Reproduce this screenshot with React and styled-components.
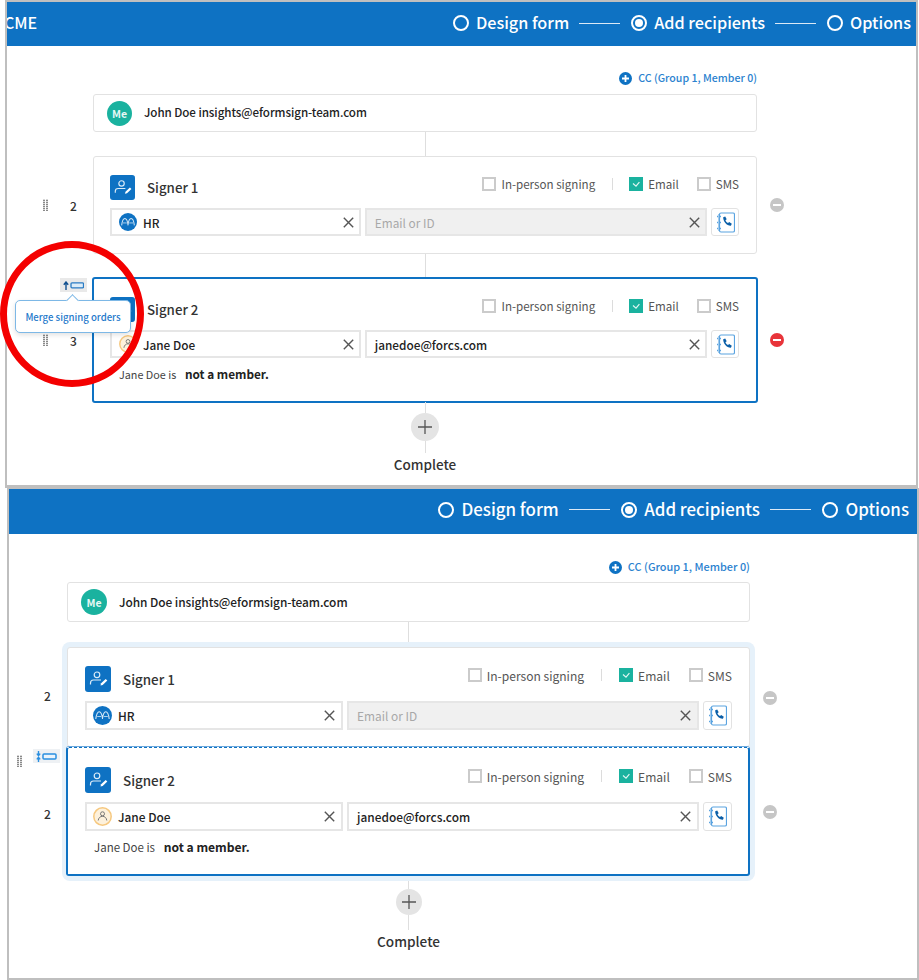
import React from 'react';
import styled, { createGlobalStyle, ThemeProvider } from 'styled-components';

const FONT = '"Noto Sans CJK KR", "Noto Sans", sans-serif';

const firstTheme = {
  gutter: 86, cardWidth: 664, iconSize: 25, avatar: 18, fieldHeight: 28, phoneWidth: 28, rowGap: 8,
  text: 11.6, optionText: 11.6, fieldText: 11.8, noteText: 10.8, title: 13.3, complete: 13.5,
  nav: 16.2, navGap: 7, headerHeight: 44, navRight: 5, navLift: 4,
  meHeight: 38, plus: 28, ccBottom: 8, topPad: 24, cardLeft: 16, cardRight: 17, notePad: 9,
  fieldLeft: 7, fieldRight: 5, optionExtra: 0,
};

const secondTheme = {
  gutter: 58, cardWidth: 683, iconSize: 26, avatar: 19, fieldHeight: 29, phoneWidth: 29, rowGap: 9,
  text: 11.9, optionText: 12.05, fieldText: 11.9, noteText: 11.5, title: 13.4, complete: 13.6,
  nav: 16.9, navGap: 7.5, headerHeight: 45, navRight: 8, navLift: 6,
  meHeight: 40, plus: 26, ccBottom: 7, topPad: 25, cardLeft: 17, cardRight: 17, notePad: 9,
  fieldLeft: 6, fieldRight: 6, optionExtra: 1,
};

const GlobalStyle = createGlobalStyle`
  html, body {
    margin: 0;
    padding: 0;
    background: #fff;
    font-family: ${FONT};
  }
  * { box-sizing: border-box; }
`;

const Page = styled.div`
  width: 919px;
  height: 980px;
  overflow: hidden;
`;

const Panel = styled.section`
  position: relative;
  margin-left: ${p => p.$left}px;
  width: ${p => p.$width}px;
  height: ${p => p.$height}px;
  border: 2px solid #bfbfbf;
  border-top-width: ${p => p.$top}px;
  border-bottom-width: ${p => p.$bottom}px;
  background: #fff;
`;

const Header = styled.header`
  display: flex;
  align-items: center;
  justify-content: space-between;
  height: ${p => p.theme.headerHeight}px;
  padding-right: ${p => p.theme.navRight}px;
  padding-bottom: ${p => p.theme.navLift}px;
  background: #0e72c3;
  color: #fff;
  overflow: hidden;
`;

const Brand = styled.span`
  margin-left: -3px;
  font-size: 16px;
  font-weight: 500;
`;

const Steps = styled.nav`
  display: flex;
  align-items: center;
  margin-left: auto;
  gap: 10px;
`;

const Step = styled.span`
  display: flex;
  align-items: center;
  gap: ${p => p.theme.navGap}px;
  font-size: ${p => p.theme.nav}px;
  font-weight: 500;
  white-space: nowrap;
`;

const StepDot = styled.i`
  display: flex;
  align-items: center;
  justify-content: center;
  width: 16px;
  height: 16px;
  margin-top: 2px;
  border: 2px solid #fff;
  border-radius: 50%;
  &::after {
    content: '';
    display: ${p => (p.$active ? 'block' : 'none')};
    width: 8px;
    height: 8px;
    border-radius: 50%;
    background: #fff;
  }
`;

const StepLine = styled.i`
  width: 41px;
  height: 1px;
  margin: 2px 1px 0 0;
  background: #dbe9f6;
`;

const Flow = styled.div`
  padding-top: ${p => p.theme.topPad}px;
`;

const Row = styled.div`
  display: grid;
  grid-template-columns: ${p => p.theme.gutter}px ${p => p.theme.cardWidth}px auto;
  align-items: center;
`;

const CcLink = styled.div`
  grid-column: 2;
  display: flex;
  justify-content: flex-end;
  align-items: center;
  gap: 6px;
  height: 16px;
  margin-bottom: ${p => p.theme.ccBottom}px;
  color: #2b82cf;
  font-size: ${p => p.theme.text - 1}px;
  font-weight: 500;
`;

const CcText = styled.span`
  padding-bottom: 2px;
`;

const MeCard = styled.div`
  grid-column: 2;
  display: flex;
  align-items: center;
  gap: 12px;
  height: ${p => p.theme.meHeight}px;
  padding-left: 13px;
  border: 1px solid #e2e2e2;
  border-radius: 3px;
  color: #222;
  font-size: ${p => p.theme.text}px;
  font-weight: 500;
  letter-spacing: -0.06px;
`;

const MeText = styled.span`
  padding-bottom: 2px;
`;

const MeAvatar = styled.span`
  display: flex;
  align-items: center;
  justify-content: center;
  width: ${p => p.theme.iconSize}px;
  height: ${p => p.theme.iconSize}px;
  border-radius: 50%;
  background: #1ab29f;
  color: #e8f8f5;
  font-size: 10.5px;
  font-weight: 700;
`;

const Connector = styled.div`
  grid-column: 2;
  justify-self: center;
  width: 1px;
  height: ${p => p.$height}px;
  background: #dedede;
`;

const Gutter = styled.div`
  position: relative;
  z-index: 2;
  align-self: stretch;
  grid-row: ${p => p.$row || 'auto'};
  display: flex;
  align-items: center;
  gap: 22px;
  margin-top: ${p => p.$nudge || 0}px;
  padding-left: ${p => p.$inset}px;
`;

const Grip = styled.span`
  display: block;
  width: 5px;
  height: 12px;
  background:
    repeating-linear-gradient(0deg, #8a8a8a 0 1px, #d8d8d8 1px 2px) left / 2px 100% no-repeat,
    repeating-linear-gradient(0deg, #8a8a8a 0 1px, #d8d8d8 1px 2px) right / 2px 100% no-repeat;
`;

const FloatingGrip = styled(Grip)`
  position: absolute;
  left: 8px;
  top: 113px;
`;

const Order = styled.span`
  color: #333;
  font-size: 12px;
  font-weight: 500;
`;

const MergeButton = styled.button`
  position: absolute;
  left: ${p => p.$left}px;
  top: ${p => p.$top}px;
  z-index: 2;
  display: flex;
  align-items: center;
  justify-content: center;
  width: 27px;
  height: 14px;
  padding: 0;
  border: 0;
  background: ${p => p.$bg};
`;

const Tooltip = styled.div`
  position: absolute;
  left: 8px;
  top: 22px;
  width: 116px;
  height: 33px;
  display: flex;
  align-items: center;
  justify-content: center;
  border: 1px solid #7db8e6;
  border-radius: 5px;
  background: #fff;
  box-shadow: 0 2px 5px rgba(0, 0, 0, 0.12);
  color: #1f7acb;
  font-size: 9.6px;
  font-weight: 500;
  white-space: nowrap;
  &::before {
    content: '';
    position: absolute;
    left: 52px;
    top: -5px;
    width: 8px;
    height: 8px;
    border-left: 1px solid #7db8e6;
    border-top: 1px solid #7db8e6;
    background: #fff;
    transform: rotate(45deg);
  }
`;

const Card = styled.article`
  padding: ${p => p.$top}px ${p => p.theme.cardRight}px ${p => p.$bottom}px ${p => p.theme.cardLeft}px;
  border: 1px solid #e2e2e2;
  border-radius: 3px;
  background: #fff;
  ${p => p.$focus && `
    margin: ${p.$flush ? '0 0 0 -1px' : '-1px'};
    border: 2px solid #0e72c3;
    ${p.$flush ? `
      padding-right: ${p.theme.cardRight - 1}px;
      border-top: 1px dashed #0e72c3;
      box-shadow: 0 -1px 0 #6ea9dd;
    ` : ''}
  `}
`;

const CardHead = styled.div`
  display: flex;
  justify-content: space-between;
  align-items: flex-start;
  height: ${p => p.theme.iconSize}px;
  margin-bottom: ${p => p.theme.rowGap}px;
`;

const SignerName = styled.div`
  display: flex;
  align-items: center;
  gap: 12px;
  color: #333;
  font-size: ${p => p.theme.title}px;
  font-weight: 500;
`;

const SignerBadge = styled.svg`
  width: ${p => p.theme.iconSize}px;
  height: ${p => p.theme.iconSize}px;
`;

const TagAvatar = styled.svg`
  flex: none;
  width: ${p => p.theme.avatar}px;
  height: ${p => p.theme.avatar}px;
`;

const Options = styled.div`
  display: flex;
  align-items: center;
  height: 18px;
  color: #555;
  font-size: ${p => p.theme.optionText}px;
`;

const Option = styled.label`
  display: flex;
  align-items: center;
  gap: 5px;
  margin-left: ${p => (p.$gap ? p.$gap + p.theme.optionExtra : 0)}px;
`;

const CheckBox = styled.span`
  display: flex;
  align-items: center;
  justify-content: center;
  width: 14px;
  height: 14px;
  border: ${p => (p.$checked ? '0' : '2px solid #cbcbcb')};
  background: ${p => (p.$checked ? '#1ab29f' : '#fff')};
`;

const Divider = styled.i`
  width: 1px;
  height: 12px;
  margin-left: 17px;
  background: #dcdcdc;
`;

const Fields = styled.div`
  display: grid;
  grid-template-columns: 0.733fr 1fr ${p => p.theme.phoneWidth}px;
  gap: 4px;
  height: ${p => p.theme.fieldHeight}px;
`;

const Field = styled.div`
  display: flex;
  align-items: center;
  gap: 6px;
  padding: 0 ${p => p.theme.fieldRight}px 0 ${p => p.$inset || p.theme.fieldLeft}px;
  border: 2px solid #e6e6e6;
  background: ${p => (p.$disabled ? '#f0f0f0' : '#fff')};
  color: ${p => (p.$disabled ? '#a8a8a8' : '#222')};
  font-size: ${p => p.theme.fieldText}px;
  font-weight: ${p => (p.$disabled ? 400 : 500)};
  span { flex: 1; }
`;

const PhoneButton = styled.button`
  display: flex;
  align-items: center;
  justify-content: center;
  padding: 0;
  border: 1px solid #e2e2e2;
  border-radius: 3px;
  background: #fff;
`;

const Note = styled.p`
  margin: 8px 0 2px;
  padding-left: ${p => p.theme.notePad}px;
  color: #444;
  font-size: ${p => p.theme.noteText}px;
  line-height: 16px;
  b {
    margin-left: 6px;
    color: #222;
    font-size: ${p => p.theme.text + 0.2}px;
    font-weight: 700;
  }
`;

const Remove = styled.button`
  grid-column: ${p => (p.$row ? 3 : 'auto')};
  grid-row: ${p => p.$row || 'auto'};
  display: flex;
  align-items: center;
  justify-content: center;
  width: 14px;
  height: 14px;
  margin-left: ${p => p.$gap}px;
  margin-top: ${p => p.$nudge || 0}px;
  padding: 0;
  border: 0;
  border-radius: 50%;
  background: ${p => (p.$danger ? '#e8343a' : '#c6c6c6')};
  &::after {
    content: '';
    width: 8px;
    height: 2px;
    background: #fff;
  }
`;

const Group = styled.div`
  position: relative;
  display: grid;
  grid-template-columns: ${p => p.theme.gutter - 5}px ${p => p.theme.cardWidth + 10}px auto;
  grid-template-rows: auto auto;
  align-items: center;
`;

const Halo = styled.div`
  grid-column: 2;
  grid-row: 1 / span 2;
  display: grid;
  grid-template-rows: subgrid;
  padding: 5px;
  border-radius: 8px;
  background: #e6f1fa;
`;

const AddButton = styled.button`
  grid-column: 2;
  justify-self: center;
  display: flex;
  align-items: center;
  justify-content: center;
  width: ${p => p.theme.plus}px;
  height: ${p => p.theme.plus}px;
  padding: 0;
  border: 0;
  border-radius: 50%;
  background: #e4e4e4;
`;

const Complete = styled.div`
  grid-column: 2;
  text-align: center;
  color: #333;
  font-size: ${p => p.theme.complete}px;
  font-weight: 500;
  line-height: 22px;
`;

const RedCircle = styled.div`
  position: absolute;
  left: -7px;
  top: 239px;
  z-index: 3;
  width: 144px;
  height: 146px;
  border: 7px solid #f40000;
  border-radius: 50%;
  pointer-events: none;
`;

const SignerIcon = () => (
  <SignerBadge viewBox="0 0 26 26">
    <rect width="26" height="26" rx="3" fill="#0e72c3" />
    <circle cx="12" cy="8.8" r="2.8" fill="none" stroke="#dcecf8" strokeWidth="1.2" />
    <path d="M5.5 18.5v-1.5a3 3 0 0 1 3-3h7.5" fill="none" stroke="#dcecf8" strokeWidth="1.2" />
    <path d="M15.5 19.5l.6-2.2 4.6-4.3 1.6 1.6-4.6 4.3z" fill="#fff" />
  </SignerBadge>
);

const GroupAvatar = () => (
  <TagAvatar viewBox="0 0 19 19">
    <circle cx="9.5" cy="9.5" r="9.5" fill="#0e72c3" />
    <path d="M2.8 13C3.300 9 4.300 5.800 6.200 5.800S9.100 9 9.600 13M9.400 13C9.900 9 10.900 5.800 12.800 5.800S15.700 9 16.200 13" fill="none" stroke="#d5e8f7" strokeWidth="1.100" />
    <path d="M4.200 10.500h4M10.800 10.500h4" stroke="#d5e8f7" strokeWidth="0.800" />
  </TagAvatar>
);

const PersonAvatar = () => (
  <TagAvatar viewBox="0 0 19 19">
    <circle cx="9.5" cy="9.5" r="8.700" fill="#fdf1dc" stroke="#f6c87f" strokeWidth="1.500" />
    <circle cx="9.5" cy="6.800" r="2" fill="none" stroke="#777" strokeWidth="1" />
    <path d="M5.200 13.500c.3-2.600 2-4.200 4.300-4.200s4 1.600 4.300 4.200" fill="none" stroke="#777" strokeWidth="1" />
  </TagAvatar>
);

const CloseIcon = () => (
  <svg width="11" height="11" viewBox="0 0 11 11">
    <path d="M.8.8l9.4 9.4M10.200.8L.8 10.200" stroke="#555" strokeWidth="1.400" />
  </svg>
);

const Tick = () => (
  <svg width="10" height="8" viewBox="0 0 10 8">
    <path d="M2 3.500l3 2.600 3.400-4" fill="none" stroke="#dff6f2" strokeWidth="1.200" />
  </svg>
);

const PhoneBook = () => (
  <svg width="19" height="21" viewBox="0 0 19 21">
    <rect x="3.500" y="1" width="15" height="19" rx="1.500" fill="#fff" stroke="#5aa3e0" strokeWidth="1.200" />
    <path d="M1 4.500h4M1 10.500h4M1 16.500h4" stroke="#5aa3e0" strokeWidth="1.600" />
    <path d="M2.500 2v17" stroke="#a3cbec" strokeWidth="1" />
    <path d="M7.200 5.200l2-.8 1.500 2.800-1.300 1.100c.5 1.200 1.400 2.200 2.600 2.800l1.200-1.200 2.600 1.800-.9 2c-4 .2-7.900-4.200-7.700-8.500z" fill="#0b5fa8" />
  </svg>
);

const PlusBadge = () => (
  <svg width="13" height="13" viewBox="0 0 13 13">
    <circle cx="6.500" cy="6.500" r="6.500" fill="#0e72c3" />
    <path d="M6.500 3v7M3 6.500h7" stroke="#fff" strokeWidth="1.800" />
  </svg>
);

const PlusIcon = () => (
  <svg width="14" height="14" viewBox="0 0 14 14">
    <path d="M7 0v14M0 7h14" stroke="#555" strokeWidth="1.300" />
  </svg>
);

const MergeUpIcon = () => (
  <svg width="21" height="9" viewBox="0 0 21 9">
    <path d="M3 9V2M.8 3.800L3 1l2.200 2.800" fill="none" stroke="#12508f" strokeWidth="1.400" />
    <rect x="8" y="1.800" width="12.500" height="5" rx="1" fill="#dcecf8" stroke="#2a7bc4" strokeWidth="1.300" />
  </svg>
);

const SplitIcon = () => (
  <svg width="21" height="11" viewBox="0 0 21 11">
    <path d="M2.500 0v4M.8 2.600l1.700 2 1.700-2M2.500 11V7M.8 8.400l1.700-2 1.700 2" fill="none" stroke="#2a8fe0" strokeWidth="1.400" />
    <rect x="7" y="3" width="13" height="5" rx="1" fill="#eaf4fc" stroke="#2a8fe0" strokeWidth="1.500" />
  </svg>
);

const StepsBar = () => (
  <Steps>
    <Step><StepDot />Design form</Step>
    <StepLine />
    <Step><StepDot $active />Add recipients</Step>
    <StepLine />
    <Step><StepDot />Options</Step>
  </Steps>
);

const SignerCard = ({ name, person, email, focus, flush, top = 18, bottom = 17 }) => (
  <Card $focus={focus} $flush={flush} $top={top} $bottom={bottom}>
    <CardHead>
      <SignerName><SignerIcon />{name}</SignerName>
      <Options>
        <Option><CheckBox />In-person signing</Option>
        <Divider />
        <Option $gap={16}><CheckBox $checked><Tick /></CheckBox>Email</Option>
        <Option $gap={18}><CheckBox />SMS</Option>
      </Options>
    </CardHead>
    <Fields>
      <Field>
        {person ? <PersonAvatar /> : <GroupAvatar />}
        <span>{person ? 'Jane Doe' : 'HR'}</span>
        <CloseIcon />
      </Field>
      <Field $inset={8} $disabled={!email}>
        <span>{email || 'Email or ID'}</span>
        <CloseIcon />
      </Field>
      <PhoneButton><PhoneBook /></PhoneButton>
    </Fields>
    {person && <Note>Jane Doe is<b> not a member.</b></Note>}
  </Card>
);

const Intro = () => (
  <Row>
    <CcLink><PlusBadge /><CcText>CC (Group 1, Member 0)</CcText></CcLink>
    <MeCard><MeAvatar>Me</MeAvatar><MeText>John Doe insights@eformsign-team.com</MeText></MeCard>
  </Row>
);

const Outro = ({ tail }) => (
  <Row>
    <AddButton><PlusIcon /></AddButton>
    <Connector $height={tail} />
    <Complete>Complete</Complete>
  </Row>
);

export default function App() {
  return (
    <Page>
      <GlobalStyle />
      <ThemeProvider theme={firstTheme}>
        <Panel $left={5} $width={913} $height={488} $top={2} $bottom={3}>
          <Header>
            <Brand>CME</Brand>
            <StepsBar />
          </Header>
          <Flow>
            <Intro />
            <Row>
              <Connector $height={24} />
            </Row>
            <Row>
              <Gutter $inset={36}><Grip /><Order>2</Order></Gutter>
              <SignerCard name="Signer 1" />
              <Remove $gap={13} />
            </Row>
            <Row>
              <Connector $height={24} />
            </Row>
            <Row>
              <Gutter $inset={36}>
                <MergeButton $left={53} $top={0} $bg="#e9e9e9"><MergeUpIcon /></MergeButton>
                <Tooltip>Merge signing orders</Tooltip>
                <Grip />
                <Order>3</Order>
              </Gutter>
              <SignerCard name="Signer 2" person email="janedoe@forcs.com" focus />
              <Remove $gap={13} $danger />
            </Row>
            <Row>
              <Connector $height={11} />
            </Row>
            <Outro tail={12} />
          </Flow>
          <RedCircle />
        </Panel>
      </ThemeProvider>
      <ThemeProvider theme={secondTheme}>
        <Panel $left={7} $width={912} $height={492} $top={1} $bottom={2}>
          <Header>
            <StepsBar />
          </Header>
          <Flow>
            <Intro />
            <Row>
              <Connector $height={20} />
            </Row>
            <Group>
              <Gutter $inset={35} $row={1} $nudge={2}><Order>2</Order></Gutter>
              <Halo>
                <SignerCard name="Signer 1" bottom={16} />
                <SignerCard name="Signer 2" person email="janedoe@forcs.com" focus flush top={19} />
              </Halo>
              <Remove $gap={8} $row={1} $nudge={6} />
              <Gutter $inset={35} $row={2} $nudge={-2}><Order>2</Order></Gutter>
              <Remove $gap={8} $row={2} $nudge={-4} />
              <FloatingGrip />
              <MergeButton $left={24} $top={107} $bg="#eef1f4"><SplitIcon /></MergeButton>
            </Group>
            <Row>
              <Connector $height={8} />
            </Row>
            <Outro tail={15} />
          </Flow>
        </Panel>
      </ThemeProvider>
    </Page>
  );
}
